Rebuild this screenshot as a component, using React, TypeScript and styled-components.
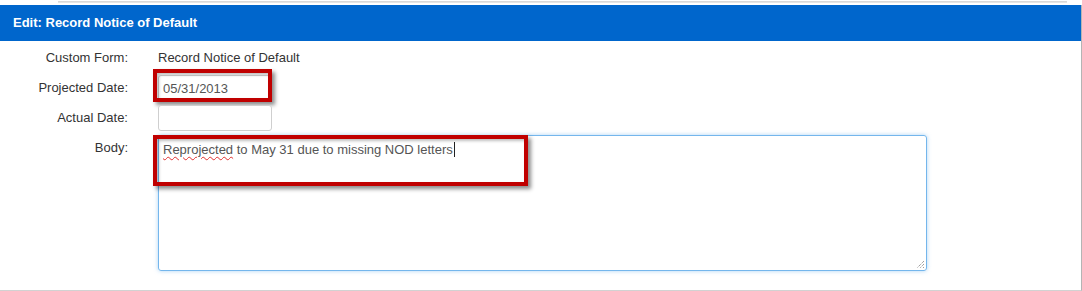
import styled, { createGlobalStyle } from 'styled-components';

const GlobalStyle = createGlobalStyle`
  body {
    margin: 0;
    background: #fff;
    font-family: "Liberation Sans", Arial, sans-serif;
  }
`;

const App = () => {
  return (
    <Wrapper>
      <GlobalStyle />
      <TopRule />
      <Panel>
        <Header>Edit: Record Notice of Default</Header>
        <Form>
          <Label>Custom Form:</Label>
          <Value>Record Notice of Default</Value>

          <Label>Projected Date:</Label>
          <Field>
            <DateInput defaultValue="05/31/2013" />
            <Highlight $left={-5} $top={-6} $width={119} $height={33} />
          </Field>

          <Label>Actual Date:</Label>
          <Field>
            <DateInput defaultValue="" />
          </Field>

          <Label>Body:</Label>
          <Field>
            <BodyBox>
              <Misspelled>Reprojected</Misspelled> to May 31 due to missing NOD letters
              <Caret />
              <ResizeGrip width="9" height="9" viewBox="0 0 9 9">
                <path d="M8 1 L1 8 M8 4 L4 8 M8 7 L7 8" stroke="#777" strokeWidth="1" strokeDasharray="1 1" />
              </ResizeGrip>
            </BodyBox>
            <Highlight $left={-5} $top={0} $width={375} $height={51} />
          </Field>
        </Form>
      </Panel>
    </Wrapper>
  );
};

const Wrapper = styled.div`
  width: 1082px;
  padding-top: 1px;
`;

const TopRule = styled.div`
  height: 2px;
  margin: 0 15px 0 58px;
  background: linear-gradient(#d2d2d2, #ececec);
`;

const Panel = styled.div`
  margin-top: 2px;
  border-right: 1px solid #b4b4b4;
  border-bottom: 1px solid #d2d2d2;
  background: #fff;
`;

const Header = styled.div`
  height: 36px;
  line-height: 35px;
  padding-left: 13px;
  background: #0066cc;
  color: #fff;
  font-size: 13px;
  font-weight: bold;
`;

const Form = styled.div`
  display: grid;
  grid-template-columns: 128px 1fr;
  column-gap: 30px;
  row-gap: 4px;
  padding: 4px 0 19px;
  font-size: 13px;
`;

const Label = styled.div`
  text-align: right;
  line-height: 26px;
  color: #333;
`;

const Value = styled.div`
  line-height: 26px;
  color: #333;
`;

const Field = styled.div`
  position: relative;
  display: flex;
`;

const DateInput = styled.input`
  box-sizing: border-box;
  width: 114px;
  height: 26px;
  padding: 0 4px;
  border: 1px solid #cfcfcf;
  border-radius: 3px;
  font-family: "Liberation Sans", Arial, sans-serif;
  font-size: 13px;
  color: #555;
  outline: none;
`;

const BodyBox = styled.div`
  position: relative;
  box-sizing: border-box;
  width: 769px;
  height: 136px;
  padding: 6px 4px;
  border: 1px solid #74b6ec;
  border-radius: 3px;
  box-shadow: 0 0 4px rgba(102, 175, 233, 0.55);
  color: #555;
  line-height: 16px;
`;

const Misspelled = styled.span`
  text-decoration: underline wavy #e03030;
  text-decoration-thickness: 1px;
  text-underline-offset: 2px;
`;

const Caret = styled.span`
  display: inline-block;
  width: 1px;
  height: 15px;
  margin-left: 1px;
  vertical-align: -3px;
  background: #222;
`;

const ResizeGrip = styled.svg`
  position: absolute;
  right: 1px;
  bottom: 1px;
`;

const Highlight = styled.div<{ $left: number; $top: number; $width: number; $height: number }>`
  position: absolute;
  left: ${(p) => p.$left}px;
  top: ${(p) => p.$top}px;
  width: ${(p) => p.$width}px;
  height: ${(p) => p.$height}px;
  box-sizing: border-box;
  border: 4px solid #c00000;
  box-shadow: 3px 3px 4px rgba(0, 0, 0, 0.45), inset 2px 2px 3px rgba(0, 0, 0, 0.25);
  pointer-events: none;
`;

export default App;
